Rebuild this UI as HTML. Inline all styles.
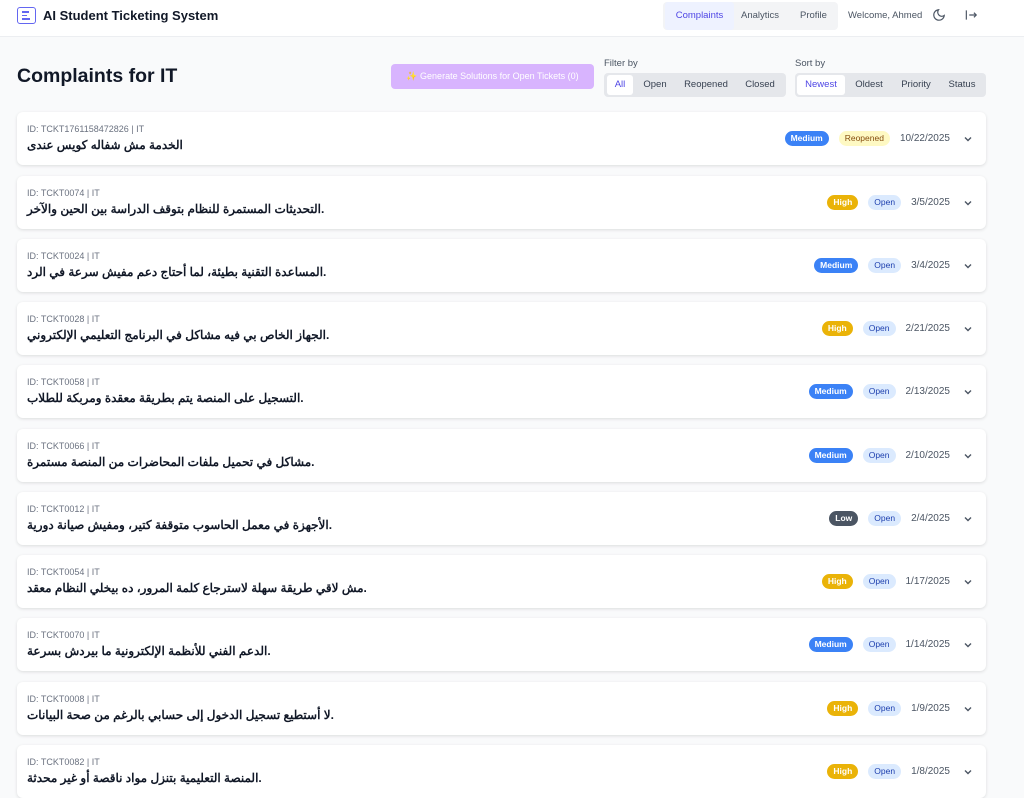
<!DOCTYPE html>
<html><head><meta charset="utf-8"><style>
*{box-sizing:border-box;margin:0;padding:0}
body{width:1024px;height:784px;overflow:hidden;background:#f9fafb;font-family:"Liberation Sans","Noto Sans CJK SC",sans-serif;color:#111827}
.hdr{position:absolute;left:0;top:0;width:1024px;height:37px;background:#fff;border-bottom:1px solid #eceef1}
.logo{position:absolute;left:17px;top:7px;width:19px;height:17px;border:1.5px solid #6366f1;border-radius:3px}
.logo i{position:absolute;left:4px;height:1.5px;background:#6366f1}
.ttl{position:absolute;left:43px;top:8px;font-size:13px;font-weight:bold;color:#111827}
.nav{position:absolute;left:663px;top:2px;width:175px;height:28px;background:#f3f4f6;border-radius:4px}
.nav span{position:absolute;top:0;height:28px;line-height:28px;font-size:9.5px;color:#4b5563}
.nav .act{background:#eef2ff;color:#4f46e5;left:2px;width:69px;text-align:center;border-radius:3px}
.wel{position:absolute;left:848px;top:10px;font-size:9.5px;color:#4b5563}
h1{position:absolute;left:17px;top:65px;font-size:19.5px;font-weight:bold}
.gen{position:absolute;left:391px;top:64px;width:203px;height:25px;background:#d8b4fe;border-radius:4px;color:#fff;font-size:9px;line-height:25px;text-align:center}
.lbl{position:absolute;top:58px;font-size:9.5px;color:#4b5563}
.seg{position:absolute;top:73px;height:24px;background:#e5e7eb;border-radius:4px}
.seg span{position:absolute;top:2px;height:20px;line-height:20px;font-size:9.5px;color:#374151;text-align:center}
.seg .on{background:#fff;color:#4f46e5;border-radius:3px}
.card{position:absolute;left:17px;width:969px;height:53px;background:#fff;border-radius:6px;box-shadow:0 1px 3px rgba(0,0,0,.12)}
.id{position:absolute;left:10px;top:12px;font-size:9px;color:#6b7280}
.t{position:absolute;left:10px;top:26px;font-size:12px;font-weight:bold;color:#111827;direction:ltr}
.r{position:absolute;right:13px;top:0;height:53px;display:flex;align-items:center}
.b{height:15px;line-height:15px;border-radius:8px;font-size:8.5px;font-weight:bold;padding:0 6px;margin-right:10px}
.m{background:#3b82f6;color:#fff}.h{background:#eab308;color:#fff}.l{background:#4b5563;color:#fff}
.o{background:#dbeafe;color:#1e40af;font-weight:normal}.re{background:#fef9c3;color:#854d0e;font-weight:normal}
.d{font-size:10px;color:#4b5563;margin-right:13px}
.chev{width:10px;height:10px}
</style></head><body>
<div class="hdr">
<div class="logo"><i style="top:3px;width:7px"></i><i style="top:6.5px;width:5px"></i><i style="top:10px;width:8px"></i></div>
<div class="ttl">AI Student Ticketing System</div>
<div class="nav"><span class="act">Complaints</span><span style="left:78px">Analytics</span><span style="left:137px">Profile</span></div>
<div class="wel">Welcome, Ahmed</div>
<svg style="position:absolute;left:932px;top:8px" width="14" height="14" viewBox="0 0 24 24" fill="none" stroke="#4b5563" stroke-width="2"><path d="M21 12.8A9 9 0 1 1 11.2 3a7 7 0 0 0 9.8 9.8z"/></svg>
<svg style="position:absolute;left:964px;top:8px" width="14" height="14" viewBox="0 0 24 24" fill="none" stroke="#4b5563" stroke-width="2"><path d="M4 4v16M9 12h12M17 8l4 4-4 4"/></svg>
</div>
<h1>Complaints for IT</h1>
<div class="gen">✨ Generate Solutions for Open Tickets (0)</div>
<div class="lbl" style="left:604px">Filter by</div>
<div class="seg" style="left:604px;width:182px"><span class="on" style="left:3px;width:26px">All</span><span style="left:35px;width:32px">Open</span><span style="left:76px;width:52px">Reopened</span><span style="left:136px;width:40px">Closed</span></div>
<div class="lbl" style="left:795px">Sort by</div>
<div class="seg" style="left:795px;width:191px"><span class="on" style="left:2px;width:48px">Newest</span><span style="left:54px;width:40px">Oldest</span><span style="left:100px;width:42px">Priority</span><span style="left:146px;width:42px">Status</span></div>

<div class="card" style="top:112px"><div class="id">ID: TCKT1761158472826 | IT</div><div class="t">الخدمة مش شفاله كويس عندى</div><div class="r"><span class="b m">Medium</span><span class="b re">Reopened</span><span class="d">10/22/2025</span><svg class="chev" viewBox="0 0 10 10"><path d="M2 3.5l3 3 3-3" fill="none" stroke="#4b5563" stroke-width="1.4"/></svg></div></div>
<div class="card" style="top:176px"><div class="id">ID: TCKT0074 | IT</div><div class="t">التحديثات المستمرة للنظام بتوقف الدراسة بين الحين والآخر.</div><div class="r"><span class="b h">High</span><span class="b o">Open</span><span class="d">3/5/2025</span><svg class="chev" viewBox="0 0 10 10"><path d="M2 3.5l3 3 3-3" fill="none" stroke="#4b5563" stroke-width="1.4"/></svg></div></div>
<div class="card" style="top:239px"><div class="id">ID: TCKT0024 | IT</div><div class="t">المساعدة التقنية بطيئة، لما أحتاج دعم مفيش سرعة في الرد.</div><div class="r"><span class="b m">Medium</span><span class="b o">Open</span><span class="d">3/4/2025</span><svg class="chev" viewBox="0 0 10 10"><path d="M2 3.5l3 3 3-3" fill="none" stroke="#4b5563" stroke-width="1.4"/></svg></div></div>
<div class="card" style="top:302px"><div class="id">ID: TCKT0028 | IT</div><div class="t">الجهاز الخاص بي فيه مشاكل في البرنامج التعليمي الإلكتروني.</div><div class="r"><span class="b h">High</span><span class="b o">Open</span><span class="d">2/21/2025</span><svg class="chev" viewBox="0 0 10 10"><path d="M2 3.5l3 3 3-3" fill="none" stroke="#4b5563" stroke-width="1.4"/></svg></div></div>
<div class="card" style="top:365px"><div class="id">ID: TCKT0058 | IT</div><div class="t">التسجيل على المنصة يتم بطريقة معقدة ومربكة للطلاب.</div><div class="r"><span class="b m">Medium</span><span class="b o">Open</span><span class="d">2/13/2025</span><svg class="chev" viewBox="0 0 10 10"><path d="M2 3.5l3 3 3-3" fill="none" stroke="#4b5563" stroke-width="1.4"/></svg></div></div>
<div class="card" style="top:429px"><div class="id">ID: TCKT0066 | IT</div><div class="t">مشاكل في تحميل ملفات المحاضرات من المنصة مستمرة.</div><div class="r"><span class="b m">Medium</span><span class="b o">Open</span><span class="d">2/10/2025</span><svg class="chev" viewBox="0 0 10 10"><path d="M2 3.5l3 3 3-3" fill="none" stroke="#4b5563" stroke-width="1.4"/></svg></div></div>
<div class="card" style="top:492px"><div class="id">ID: TCKT0012 | IT</div><div class="t">الأجهزة في معمل الحاسوب متوقفة كتير، ومفيش صيانة دورية.</div><div class="r"><span class="b l">Low</span><span class="b o">Open</span><span class="d">2/4/2025</span><svg class="chev" viewBox="0 0 10 10"><path d="M2 3.5l3 3 3-3" fill="none" stroke="#4b5563" stroke-width="1.4"/></svg></div></div>
<div class="card" style="top:555px"><div class="id">ID: TCKT0054 | IT</div><div class="t">مش لاقي طريقة سهلة لاسترجاع كلمة المرور، ده بيخلي النظام معقد.</div><div class="r"><span class="b h">High</span><span class="b o">Open</span><span class="d">1/17/2025</span><svg class="chev" viewBox="0 0 10 10"><path d="M2 3.5l3 3 3-3" fill="none" stroke="#4b5563" stroke-width="1.4"/></svg></div></div>
<div class="card" style="top:618px"><div class="id">ID: TCKT0070 | IT</div><div class="t">الدعم الفني للأنظمة الإلكترونية ما بيردش بسرعة.</div><div class="r"><span class="b m">Medium</span><span class="b o">Open</span><span class="d">1/14/2025</span><svg class="chev" viewBox="0 0 10 10"><path d="M2 3.5l3 3 3-3" fill="none" stroke="#4b5563" stroke-width="1.4"/></svg></div></div>
<div class="card" style="top:682px"><div class="id">ID: TCKT0008 | IT</div><div class="t">لا أستطيع تسجيل الدخول إلى حسابي بالرغم من صحة البيانات.</div><div class="r"><span class="b h">High</span><span class="b o">Open</span><span class="d">1/9/2025</span><svg class="chev" viewBox="0 0 10 10"><path d="M2 3.5l3 3 3-3" fill="none" stroke="#4b5563" stroke-width="1.4"/></svg></div></div>
<div class="card" style="top:745px"><div class="id">ID: TCKT0082 | IT</div><div class="t">المنصة التعليمية بتنزل مواد ناقصة أو غير محدثة.</div><div class="r"><span class="b h">High</span><span class="b o">Open</span><span class="d">1/8/2025</span><svg class="chev" viewBox="0 0 10 10"><path d="M2 3.5l3 3 3-3" fill="none" stroke="#4b5563" stroke-width="1.4"/></svg></div></div>
</body></html>
